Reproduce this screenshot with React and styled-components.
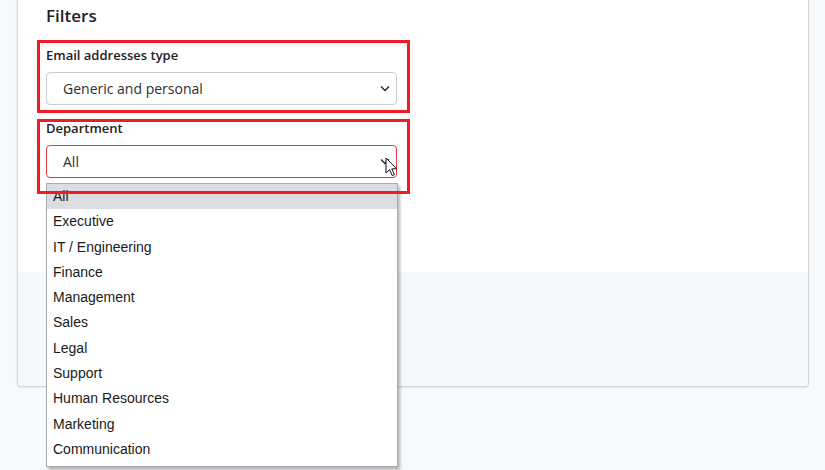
import React from "react";
import styled, { createGlobalStyle } from "styled-components";

const GlobalStyle = createGlobalStyle`
  html, body {
    margin: 0;
    padding: 0;
    background: #f8f9fa;
  }
  body {
    font-family: "Open Sans", "Liberation Sans", sans-serif;
    color: #212529;
  }
`;

const Page = styled.div`
  width: 825px;
  height: 470px;
  overflow: hidden;
  background: #f8f9fa;
  padding-left: 17px;
  box-sizing: border-box;
`;

const Card = styled.div`
  display: flex;
  flex-direction: column;
  width: 792px;
  background: #fff;
  border: 1px solid #d4d7da;
  border-top: none;
  border-radius: 0 0 4px 4px;
  box-shadow: 0 1px 2px rgba(0, 0, 0, 0.08);
  box-sizing: border-box;
`;

const CardBody = styled.div`
  display: flex;
  flex-direction: column;
  gap: 15px;
  height: 272px;
  padding: 6px 0 0 28px;
  box-sizing: border-box;
`;

const CardFooter = styled.div`
  height: 114px;
  background: #f7f8f9;
  border-radius: 0 0 4px 4px;
`;

const Heading = styled.h3`
  margin: 0 0 6px;
  font-size: 17px;
  line-height: 20px;
  font-weight: 600;
  color: #1d2125;
`;

const Field = styled.div`
  position: relative;
  display: flex;
  flex-direction: column;
  gap: 9px;
  width: 351px;

  &::after {
    content: "";
    position: absolute;
    top: ${(p) => p.$frame[0]}px;
    left: -9px;
    width: 373px;
    height: ${(p) => p.$frame[1]}px;
    box-sizing: border-box;
    border: 3px solid #ee1c25;
    pointer-events: none;
    z-index: 3;
  }
`;

const Label = styled.div`
  font-size: 13px;
  line-height: 16px;
  font-weight: 600;
  color: #1d2125;
`;

const SelectBox = styled.div`
  position: relative;
  height: 33px;
  box-sizing: border-box;
  border: 1px solid ${(p) => (p.$focused ? "#e0393e" : "#c9cdd1")};
  border-radius: 4px;
  background: #fff;
  display: flex;
  align-items: center;
  padding-left: 16px;
  font-size: 14px;
  color: #2b2f33;
`;

const Chevron = styled.svg`
  position: absolute;
  right: 6px;
  top: 50%;
  margin-top: -4px;
`;

const Cursor = styled.svg`
  position: absolute;
  left: 338px;
  top: 11px;
  z-index: 4;
`;

const Dropdown = styled.ul`
  position: absolute;
  top: calc(100% + 6px);
  left: -1px;
  width: 352px;
  margin: 0;
  padding: 0 0 4px;
  list-style: none;
  background: #fff;
  border: 1px solid #a9abaf;
  box-sizing: border-box;
  box-shadow: 2px 3px 3px rgba(0, 0, 0, 0.28);
  z-index: 2;
  font-family: "Liberation Sans", Arial, sans-serif;
  font-size: 14px;
  color: #1a1a1a;
`;

const Option = styled.li`
  height: 25.3px;
  line-height: 25.3px;
  padding-left: 6px;
  background: ${(p) => (p.$active ? "#dcdde2" : "transparent")};
`;

const departments = [
  "All",
  "Executive",
  "IT / Engineering",
  "Finance",
  "Management",
  "Sales",
  "Legal",
  "Support",
  "Human Resources",
  "Marketing",
  "Communication"
];

const ChevronIcon = () => (
  <Chevron width="10" height="7" viewBox="0 0 10 7">
    <path d="M1 1.5 L5 5.5 L9 1.5" fill="none" stroke="#2b2f33" strokeWidth="1.5" />
  </Chevron>
);

const App = () => (
  <Page>
    <GlobalStyle />
    <Card>
      <CardBody>
        <Heading>Filters</Heading>
        <Field $frame={[-7, 73]}>
          <Label>Email addresses type</Label>
          <SelectBox>
            Generic and personal
            <ChevronIcon />
          </SelectBox>
        </Field>
        <Field $frame={[-1, 75]}>
          <Label>Department</Label>
          <SelectBox $focused>
            All
            <ChevronIcon />
            <Cursor width="14" height="20" viewBox="0 0 14 20">
              <path
                d="M1 1 L1 16 L4.5 12.6 L7.2 18.6 L9.4 17.6 L6.8 11.8 L11.6 11.8 Z"
                fill="#fff"
                stroke="#111"
                strokeWidth="1"
                strokeLinejoin="round"
              />
            </Cursor>
            <Dropdown>
              {departments.map((d, i) => (
                <Option key={d} $active={i === 0}>
                  {d}
                </Option>
              ))}
            </Dropdown>
          </SelectBox>
        </Field>
      </CardBody>
      <CardFooter />
    </Card>
  </Page>
);

export default App;
